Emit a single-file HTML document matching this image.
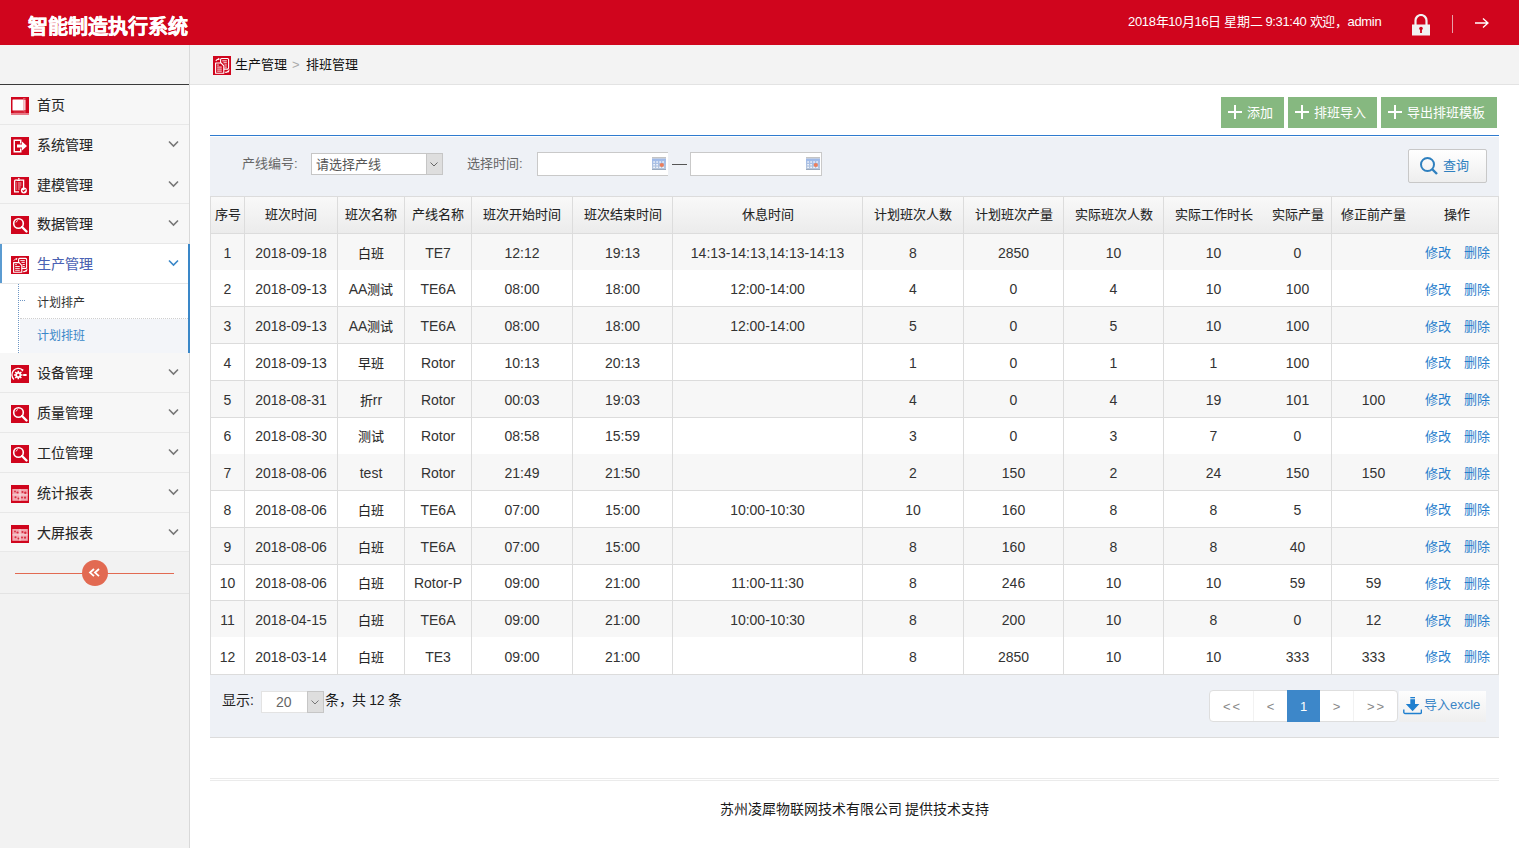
<!DOCTYPE html>
<html lang="zh-CN"><head><meta charset="utf-8">
<style>
*{box-sizing:border-box;margin:0;padding:0}
html,body{width:1519px;height:848px;overflow:hidden;background:#fff;font-family:"Liberation Sans",sans-serif;color:#333}
.abs{position:absolute}
svg{display:block}
#hdr{left:0;top:0;width:1519px;height:45px;background:#d0051d}
#title{left:28px;top:14px;font-size:20px;font-weight:bold;color:#fff;-webkit-text-stroke:0.4px #fff;line-height:26px;white-space:nowrap}
#hinfo{left:1128px;top:13px;font-size:13px;letter-spacing:-0.35px;color:#fff;line-height:18px;white-space:nowrap}
#side{left:0;top:45px;width:190px;height:803px;background:#f2f2f2;border-right:1px solid #d9d9d9}
.mi{position:absolute;left:0;width:189px;height:40px;background:#f7f7f7;border-bottom:1px solid #e8e8e8}
.mi .ic{position:absolute;left:11px;top:12px;width:18px;height:18px}
.mi .tx{position:absolute;left:37px;top:11px;font-size:14px;line-height:18px;color:#262626;-webkit-text-stroke:0.08px #262626;white-space:nowrap}
.mi .chev{position:absolute;left:168px;top:15px;width:11px;height:8px}
.sub{position:absolute;left:0;width:189px;background:#fff}
.sub .tx{position:absolute;left:37px;font-size:12px;line-height:16px;color:#333;white-space:nowrap}
#crumb{left:190px;top:45px;width:1329px;height:40px;background:#f3f3f3;border-bottom:1px solid #e3e3e3}
.btn{position:absolute;top:97px;height:31px;background:#86b880;color:#fff;font-size:13px;line-height:31px;white-space:nowrap}
.btn .pl{position:absolute;left:7px;top:8px;width:14px;height:14px}
.btn .bt{position:absolute;left:26px;top:0}
#bline{left:210px;top:135px;width:1289px;height:1px;background:#2f7bcf}
#filter{left:210px;top:137px;width:1289px;height:60px;background:#eef1f6}
.lbl{position:absolute;font-size:13px;color:#666;line-height:18px;white-space:nowrap}
.inp{position:absolute;background:#fff;border:1px solid #c9c9c9}
.thbg{background:linear-gradient(#f9f9f9,#ebebeb)}
.hl{left:210px;width:1289px;height:1px;background:#dcdcdc}
.vl{top:196px;width:1px;height:479px;background:#dcdcdc}
.th{top:206px;font-size:13px;line-height:18px;text-align:center;color:#222;-webkit-text-stroke:0.08px #222;white-space:nowrap}
.td{font-size:14px;line-height:18px;text-align:center;color:#333;white-space:nowrap}
.c{font-size:13px;color:#262626;-webkit-text-stroke:0.08px #262626}
.ops{left:1416px;width:82px;text-align:center;font-size:13px;line-height:18px;white-space:nowrap}
.ops a{color:#267dcc;text-decoration:none}
#pager{left:210px;top:675px;width:1289px;height:63px;background:#eef1f6;border-bottom:1px solid #dcdcdc}
#foot{left:210px;top:778px;width:1289px;height:3px;border-top:1px solid #ebebeb;border-bottom:1px solid #ebebeb}
#ftxt{left:190px;top:800px;width:1329px;text-align:center;font-size:14px;color:#1a1a1a;line-height:18px;white-space:nowrap}
</style></head><body>
<div id="hdr" class="abs">
  <div id="title" class="abs">智能制造执行系统</div>
  <div id="hinfo" class="abs">2018年10月16日 星期二 9:31:40 欢迎，admin</div>
  <svg class="abs" style="left:1411px;top:14px" width="20" height="22" viewBox="0 0 20 22"><path d="M4.5 11V6.5a5.5 5.5 0 0 1 11 0V11" fill="none" stroke="#f2f2f2" stroke-width="2.2"/><rect x="1" y="10.5" width="18" height="11" fill="#f2f2f2"/><circle cx="10" cy="14.5" r="1.8" fill="#d0051d"/><rect x="9.1" y="15" width="1.8" height="4" fill="#d0051d"/></svg>
  <div class="abs" style="left:1452px;top:15px;width:1px;height:18px;background:#e8a0a8"></div>
  <svg class="abs" style="left:1474px;top:17px" width="16" height="12" viewBox="0 0 16 12"><path d="M1 6h13M9 1.5l5 4.5-5 4.5" fill="none" stroke="#fff" stroke-width="1.3"/></svg>
</div>
<div id="side" class="abs"></div>
<div class="abs" style="left:0;top:45px;width:189px;height:39px;background:#f3f3f3"></div>
<div class="abs" style="left:0;top:84px;width:189px;height:1px;background:#3a3a3a"></div>
<div class="mi" style="top:85px;height:40px;"><svg class="ic" viewBox="0 0 18 18"><rect x="0" y="0" width="18" height="18" fill="#d0051d"/><rect x="12" y="1" width="6" height="17" fill="#e8909a" opacity="0.6"/><rect x="14.5" y="1" width="3.5" height="17" fill="#d0051d"/><rect x="1.5" y="2.5" width="11" height="11" rx="0.5" fill="#fff"/><rect x="12.5" y="3" width="2" height="10" fill="#f6c9ce"/><rect x="2.5" y="14.2" width="11" height="1.8" fill="#d7283c"/><rect x="0" y="16" width="18" height="2" fill="#e77a87"/></svg><div class="tx">首页</div></div>
<div class="mi" style="top:125px;height:40px;border-bottom-color:#f7f7f7"><svg class="ic" viewBox="0 0 18 18"><rect x="0" y="0" width="18" height="18" fill="#d0051d"/><path d="M2.5 2.5h8v4h-1.5v-2.5h-5v10h5v-2.5h1.5v4h-8z" fill="#fff"/><path d="M6 7.5h5v-3l5 4.5-5 4.5v-3h-5z" fill="#fff"/></svg><div class="tx">系统管理</div><svg class="chev" viewBox="0 0 11 8"><path d="M1 1.5l4.5 4.5 4.5-4.5" fill="none" stroke="#777" stroke-width="1.6"/></svg></div>
<div class="mi" style="top:165px;height:39px;"><svg class="ic" viewBox="0 0 18 18"><rect x="0" y="0" width="18" height="18" fill="#d0051d"/><path d="M3.6 3.2h2.4M9.6 3.2h3v8.3M8 14.8H3.6V3.2" fill="none" stroke="#fff" stroke-width="1.3"/><path d="M5.6 2.6h4.4l-0.6 1.4H6.2z" fill="#fff"/><circle cx="7.8" cy="1.8" r="0.9" fill="#fff"/><path d="M5.2 6h0.8M6.8 6h3.6M5.2 8h0.8M6.8 8h3.6M5.2 10h0.8M6.8 10h2.8M5.2 12h0.8M6.8 12h2" stroke="#fff" stroke-width="0.9" opacity="0.8"/><circle cx="12.9" cy="13.4" r="3" fill="#fff"/><path d="M11.5 13.4l1.1 1.1 1.9-2" stroke="#d0051d" stroke-width="1.1" fill="none"/></svg><div class="tx">建模管理</div><svg class="chev" viewBox="0 0 11 8"><path d="M1 1.5l4.5 4.5 4.5-4.5" fill="none" stroke="#777" stroke-width="1.6"/></svg></div>
<div class="mi" style="top:204px;height:40px;"><svg class="ic" viewBox="0 0 18 18"><rect x="0" y="0" width="18" height="18" fill="#d0051d"/><circle cx="7.5" cy="7.5" r="4.8" fill="none" stroke="#fff" stroke-width="1.6"/><path d="M11 11l4.5 4.5" stroke="#fff" stroke-width="2.4" stroke-linecap="round"/><path d="M5 6.5a2.5 2.5 0 0 1 2-2" stroke="#fff" stroke-width="0.8" fill="none"/></svg><div class="tx">数据管理</div><svg class="chev" viewBox="0 0 11 8"><path d="M1 1.5l4.5 4.5 4.5-4.5" fill="none" stroke="#777" stroke-width="1.6"/></svg></div>
<div class="mi" style="top:353px;height:40px;"><svg class="ic" viewBox="0 0 18 18"><rect x="0" y="0" width="18" height="18" fill="#d0051d"/><path d="M3 14.5A5.8 5.8 0 0 1 11.5 5" fill="none" stroke="#fff" stroke-width="1.3"/><path d="M10.2 3.8l2.6 1-1.8 2z" fill="#fff"/><circle cx="7.3" cy="10" r="2.9" fill="#fff"/><path d="M7.3 5.8v8.4M3.1 10h8.4M4.3 7l6 6M10.3 7l-6 6" stroke="#fff" stroke-width="1.6"/><circle cx="7.3" cy="10" r="1.2" fill="#d0051d"/><path d="M12.2 10h3.4" stroke="#fff" stroke-width="2"/></svg><div class="tx">设备管理</div><svg class="chev" viewBox="0 0 11 8"><path d="M1 1.5l4.5 4.5 4.5-4.5" fill="none" stroke="#777" stroke-width="1.6"/></svg></div>
<div class="mi" style="top:393px;height:40px;"><svg class="ic" viewBox="0 0 18 18"><rect x="0" y="0" width="18" height="18" fill="#d0051d"/><circle cx="7.5" cy="7.5" r="4.8" fill="none" stroke="#fff" stroke-width="1.6"/><path d="M11 11l4.5 4.5" stroke="#fff" stroke-width="2.4" stroke-linecap="round"/><path d="M5 6.5a2.5 2.5 0 0 1 2-2" stroke="#fff" stroke-width="0.8" fill="none"/></svg><div class="tx">质量管理</div><svg class="chev" viewBox="0 0 11 8"><path d="M1 1.5l4.5 4.5 4.5-4.5" fill="none" stroke="#777" stroke-width="1.6"/></svg></div>
<div class="mi" style="top:433px;height:40px;"><svg class="ic" viewBox="0 0 18 18"><rect x="0" y="0" width="18" height="18" fill="#d0051d"/><circle cx="7.5" cy="7.5" r="4.8" fill="none" stroke="#fff" stroke-width="1.6"/><path d="M11 11l4.5 4.5" stroke="#fff" stroke-width="2.4" stroke-linecap="round"/><path d="M5 6.5a2.5 2.5 0 0 1 2-2" stroke="#fff" stroke-width="0.8" fill="none"/></svg><div class="tx">工位管理</div><svg class="chev" viewBox="0 0 11 8"><path d="M1 1.5l4.5 4.5 4.5-4.5" fill="none" stroke="#777" stroke-width="1.6"/></svg></div>
<div class="mi" style="top:473px;height:40px;"><svg class="ic" viewBox="0 0 18 18"><rect x="0" y="0" width="18" height="18" fill="#d0051d"/><rect x="1.3" y="4" width="15.5" height="11.8" fill="#f1a8b0"/><path d="M9 4v11.8M1.3 9.9h15.5" stroke="#fbe3e6" stroke-width="0.8"/><g fill="#d0051d" opacity="0.75"><circle cx="4" cy="6.5" r="0.9"/><circle cx="6.5" cy="7.5" r="1.1"/><circle cx="11.5" cy="7" r="1.1"/><circle cx="14.3" cy="7.8" r="1.2"/><circle cx="4.5" cy="12.2" r="1"/><circle cx="7.4" cy="13.5" r="0.9"/><circle cx="11" cy="12.5" r="1"/><circle cx="14" cy="12.7" r="1.1"/></g></svg><div class="tx">统计报表</div><svg class="chev" viewBox="0 0 11 8"><path d="M1 1.5l4.5 4.5 4.5-4.5" fill="none" stroke="#777" stroke-width="1.6"/></svg></div>
<div class="mi" style="top:513px;height:39px;"><svg class="ic" viewBox="0 0 18 18"><rect x="0" y="0" width="18" height="18" fill="#d0051d"/><rect x="1.3" y="4" width="15.5" height="11.8" fill="#f1a8b0"/><path d="M9 4v11.8M1.3 9.9h15.5" stroke="#fbe3e6" stroke-width="0.8"/><g fill="#d0051d" opacity="0.75"><circle cx="4" cy="6.5" r="0.9"/><circle cx="6.5" cy="7.5" r="1.1"/><circle cx="11.5" cy="7" r="1.1"/><circle cx="14.3" cy="7.8" r="1.2"/><circle cx="4.5" cy="12.2" r="1"/><circle cx="7.4" cy="13.5" r="0.9"/><circle cx="11" cy="12.5" r="1"/><circle cx="14" cy="12.7" r="1.1"/></g></svg><div class="tx">大屏报表</div><svg class="chev" viewBox="0 0 11 8"><path d="M1 1.5l4.5 4.5 4.5-4.5" fill="none" stroke="#777" stroke-width="1.6"/></svg></div>
<div class="mi" style="top:244px;height:40px;background:#fff"><svg class="ic" viewBox="0 0 18 18"><rect x="0" y="0" width="18" height="18" fill="#d0051d"/><rect x="7.6" y="2.4" width="8" height="10" rx="1" fill="none" stroke="#fff" stroke-width="1.1"/><path d="M9.3 4.6h4.5M10.5 6.4h3.3M11.5 8.5h2.3M11.5 10.5h2.3" stroke="#fff" stroke-width="0.9"/><path d="M2.6 6.6h5.5l2.7 2.7v7H2.6z" fill="#d0051d" stroke="#fff" stroke-width="1.1" stroke-linejoin="round"/><path d="M4.2 8.6h1.6M4.2 10.5h4.6M4.2 12.4h4.6M4.2 14.3h4.6" stroke="#fff" stroke-width="0.9"/><path d="M2.8 4.6c0.8-1.2 1.8-1.8 3.2-1.8l-0.6-0.8M6 2.8l-0.9 0.9" stroke="#fff" stroke-width="1" fill="none"/><path d="M12.2 15.6c1.2 0 2.4-0.5 3.4-1.4l-0.3 1.2" stroke="#fff" stroke-width="1.2" fill="none"/></svg><div class="tx" style="color:#4a62b8">生产管理</div><svg class="chev" viewBox="0 0 11 8"><path d="M1 1.5l4.5 4.5 4.5-4.5" fill="none" stroke="#3a87c8" stroke-width="1.6"/></svg></div>
<div class="abs" style="left:0;top:244px;width:2px;height:39px;background:#5b9bd1"></div>
<div class="sub" style="top:284px;height:35px"><div class="tx" style="top:11px">计划排产</div></div>
<div class="abs" style="left:20px;top:318px;width:168px;height:1px;border-top:1px dotted #cfcfcf"></div>
<div class="sub" style="top:319px;height:34px;background:#fff"><div class="abs" style="left:20px;top:0;width:169px;height:34px;background:#f3f5f9"></div><div class="tx" style="top:9px;color:#3a87c8">计划排班</div></div>
<div class="abs" style="left:18px;top:284px;width:1px;height:69px;border-left:1px dotted #6e96c4"></div>
<div class="abs" style="left:18px;top:300px;width:7px;height:1px;border-top:1px dotted #6e96c4"></div>
<div class="abs" style="left:188px;top:244px;width:2px;height:109px;background:#3a87c8"></div>
<div class="abs" style="left:0;top:552px;width:189px;height:42px;background:#f2f2f2;border-bottom:1px solid #e3e3e3"></div>
<div class="abs" style="left:15px;top:573px;width:159px;height:1px;background:#e26a52"></div>
<svg class="abs" style="left:82px;top:560px" width="26" height="26" viewBox="0 0 26 26"><circle cx="13" cy="13" r="13" fill="#e26a52"/><path d="M12 9l-4 3.6 4 3.6M17 9l-4 3.6 4 3.6" fill="none" stroke="#fff" stroke-width="1.8"/></svg>
<div id="crumb" class="abs"></div>
<svg class="abs" style="left:213px;top:56px" width="18" height="19" viewBox="0 0 18 18" preserveAspectRatio="none"><rect x="0" y="0" width="18" height="18" fill="#d0051d"/><rect x="7.6" y="2.4" width="8" height="10" rx="1" fill="none" stroke="#fff" stroke-width="1.1"/><path d="M9.3 4.6h4.5M10.5 6.4h3.3M11.5 8.5h2.3M11.5 10.5h2.3" stroke="#fff" stroke-width="0.9"/><path d="M2.6 6.6h5.5l2.7 2.7v7H2.6z" fill="#d0051d" stroke="#fff" stroke-width="1.1" stroke-linejoin="round"/><path d="M4.2 8.6h1.6M4.2 10.5h4.6M4.2 12.4h4.6M4.2 14.3h4.6" stroke="#fff" stroke-width="0.9"/><path d="M2.8 4.6c0.8-1.2 1.8-1.8 3.2-1.8l-0.6-0.8M6 2.8l-0.9 0.9" stroke="#fff" stroke-width="1" fill="none"/><path d="M12.2 15.6c1.2 0 2.4-0.5 3.4-1.4l-0.3 1.2" stroke="#fff" stroke-width="1.2" fill="none"/></svg>
<div class="abs" style="left:235px;top:56px;font-size:13px;line-height:18px;color:#111;white-space:nowrap">生产管理</div>
<div class="abs" style="left:292px;top:56px;font-size:13px;line-height:18px;color:#aaa">&gt;</div>
<div class="abs" style="left:306px;top:56px;font-size:13px;line-height:18px;color:#111;white-space:nowrap">排班管理</div>
<div class="btn" style="left:1221px;width:63px"><svg class="pl" viewBox="0 0 14 14"><path d="M6 0h2v6h6v2H8v6H6V8H0V6h6z" fill="#fff"/></svg><span class="bt">添加</span></div>
<div class="btn" style="left:1288px;width:89px"><svg class="pl" viewBox="0 0 14 14"><path d="M6 0h2v6h6v2H8v6H6V8H0V6h6z" fill="#fff"/></svg><span class="bt">排班导入</span></div>
<div class="btn" style="left:1381px;width:116px"><svg class="pl" viewBox="0 0 14 14"><path d="M6 0h2v6h6v2H8v6H6V8H0V6h6z" fill="#fff"/></svg><span class="bt">导出排班模板</span></div>
<div id="bline" class="abs"></div>
<div id="filter" class="abs"></div>
<div class="lbl" style="left:242px;top:155px">产线编号:</div>
<div class="inp" style="left:311px;top:153px;width:132px;height:22px;border-color:#c6c6c6"></div>
<div class="abs" style="left:316px;top:156px;font-size:13px;line-height:18px;color:#555;white-space:nowrap">请选择产线</div>
<div class="abs" style="left:426px;top:154px;width:16px;height:20px;background:#dedede;border-left:1px solid #c6c6c6"></div>
<svg class="abs" style="left:430px;top:162px" width="8" height="5" viewBox="0 0 8 5"><path d="M0.5 0.5l3.5 3.5 3.5-3.5" fill="none" stroke="#666" stroke-width="1"/></svg>
<div class="lbl" style="left:467px;top:155px">选择时间:</div>
<div class="inp" style="left:537px;top:152px;width:131px;height:24px;border-right:none"></div>
<svg class="abs" style="left:652px;top:157px" width="14" height="13" viewBox="0 0 14 13"><defs><linearGradient id="cg652" x1="0" y1="0" x2="0" y2="1"><stop offset="0" stop-color="#9db9ea"/><stop offset="1" stop-color="#b9c8dc"/></linearGradient></defs><rect x="0" y="0" width="14" height="1.6" fill="#c4c4c4"/><rect x="0" y="1.6" width="14" height="11.4" fill="url(#cg652)"/><rect x="0" y="12" width="14" height="1" fill="#9aa9bd"/><g fill="#fff" opacity="0.9"><rect x="1.3" y="4.3" width="1.6" height="1.4"/><rect x="4.3" y="4.3" width="1.6" height="1.4"/><rect x="7.3" y="4.3" width="1.6" height="1.4"/><rect x="10.3" y="4.3" width="1.6" height="1.4"/><rect x="1.3" y="7" width="1.6" height="1.4"/><rect x="4.3" y="7" width="1.6" height="1.4"/><rect x="1.3" y="9.6" width="1.6" height="1.4"/><rect x="4.3" y="9.6" width="1.6" height="1.4"/><rect x="7.3" y="9.6" width="1.6" height="1.4"/><rect x="10.3" y="9.6" width="1.6" height="1.4"/></g><circle cx="9.8" cy="8" r="2.1" fill="#ec7e5c"/></svg>
<div class="abs" style="left:672px;top:164px;width:15px;height:1px;background:#555"></div>
<div class="inp" style="left:690px;top:152px;width:132px;height:24px"></div>
<svg class="abs" style="left:806px;top:157px" width="14" height="13" viewBox="0 0 14 13"><defs><linearGradient id="cg806" x1="0" y1="0" x2="0" y2="1"><stop offset="0" stop-color="#9db9ea"/><stop offset="1" stop-color="#b9c8dc"/></linearGradient></defs><rect x="0" y="0" width="14" height="1.6" fill="#c4c4c4"/><rect x="0" y="1.6" width="14" height="11.4" fill="url(#cg806)"/><rect x="0" y="12" width="14" height="1" fill="#9aa9bd"/><g fill="#fff" opacity="0.9"><rect x="1.3" y="4.3" width="1.6" height="1.4"/><rect x="4.3" y="4.3" width="1.6" height="1.4"/><rect x="7.3" y="4.3" width="1.6" height="1.4"/><rect x="10.3" y="4.3" width="1.6" height="1.4"/><rect x="1.3" y="7" width="1.6" height="1.4"/><rect x="4.3" y="7" width="1.6" height="1.4"/><rect x="1.3" y="9.6" width="1.6" height="1.4"/><rect x="4.3" y="9.6" width="1.6" height="1.4"/><rect x="7.3" y="9.6" width="1.6" height="1.4"/><rect x="10.3" y="9.6" width="1.6" height="1.4"/></g><circle cx="9.8" cy="8" r="2.1" fill="#ec7e5c"/></svg>
<div class="abs" style="left:1408px;top:149px;width:79px;height:34px;border:1px solid #c8c8c8;border-radius:2px;background:linear-gradient(#fff,#eeeeee)"></div>
<svg class="abs" style="left:1419px;top:156px" width="20" height="20" viewBox="0 0 20 20"><circle cx="8.5" cy="8.5" r="6.5" fill="none" stroke="#2f80bf" stroke-width="2"/><path d="M13 13l5 5" stroke="#2f80bf" stroke-width="2.4"/></svg>
<div class="abs" style="left:1443px;top:157px;font-size:13px;line-height:18px;color:#2f80bf">查询</div>
<div class="abs thbg" style="left:210px;top:196px;width:1289px;height:38px"></div>
<div class="abs" style="left:211px;top:233.00px;width:1287px;height:36.75px;background:#f7f7f7"></div>
<div class="abs" style="left:211px;top:269.75px;width:1287px;height:36.75px;background:#fff"></div>
<div class="abs" style="left:211px;top:306.50px;width:1287px;height:36.75px;background:#f7f7f7"></div>
<div class="abs" style="left:211px;top:343.25px;width:1287px;height:36.75px;background:#fff"></div>
<div class="abs" style="left:211px;top:380.00px;width:1287px;height:36.75px;background:#f7f7f7"></div>
<div class="abs" style="left:211px;top:416.75px;width:1287px;height:36.75px;background:#fff"></div>
<div class="abs" style="left:211px;top:453.50px;width:1287px;height:36.75px;background:#f7f7f7"></div>
<div class="abs" style="left:211px;top:490.25px;width:1287px;height:36.75px;background:#fff"></div>
<div class="abs" style="left:211px;top:527.00px;width:1287px;height:36.75px;background:#f7f7f7"></div>
<div class="abs" style="left:211px;top:563.75px;width:1287px;height:36.75px;background:#fff"></div>
<div class="abs" style="left:211px;top:600.50px;width:1287px;height:36.75px;background:#f7f7f7"></div>
<div class="abs" style="left:211px;top:637.25px;width:1287px;height:36.75px;background:#fff"></div>
<div class="abs hl" style="top:196px"></div>
<div class="abs hl" style="top:233px"></div>
<div class="abs hl" style="top:306px"></div>
<div class="abs hl" style="top:343px"></div>
<div class="abs hl" style="top:380px"></div>
<div class="abs hl" style="top:417px"></div>
<div class="abs hl" style="top:490px"></div>
<div class="abs hl" style="top:527px"></div>
<div class="abs hl" style="top:564px"></div>
<div class="abs hl" style="top:600px"></div>
<div class="abs hl" style="top:674px"></div>
<div class="abs vl" style="left:210px"></div>
<div class="abs vl" style="left:244px"></div>
<div class="abs vl" style="left:337px"></div>
<div class="abs vl" style="left:404px"></div>
<div class="abs vl" style="left:471px"></div>
<div class="abs vl" style="left:572px"></div>
<div class="abs vl" style="left:672px"></div>
<div class="abs vl" style="left:862px"></div>
<div class="abs vl" style="left:963px"></div>
<div class="abs vl" style="left:1063px"></div>
<div class="abs vl" style="left:1163px"></div>
<div class="abs vl" style="left:1331px"></div>
<div class="abs vl" style="left:1498px"></div>
<div class="abs th" style="left:211px;width:33px">序号</div>
<div class="abs th" style="left:245px;width:92px">班次时间</div>
<div class="abs th" style="left:338px;width:66px">班次名称</div>
<div class="abs th" style="left:405px;width:66px">产线名称</div>
<div class="abs th" style="left:472px;width:100px">班次开始时间</div>
<div class="abs th" style="left:573px;width:99px">班次结束时间</div>
<div class="abs th" style="left:673px;width:189px">休息时间</div>
<div class="abs th" style="left:863px;width:100px">计划班次人数</div>
<div class="abs th" style="left:964px;width:99px">计划班次产量</div>
<div class="abs th" style="left:1064px;width:99px">实际班次人数</div>
<div class="abs th" style="left:1164px;width:99px">实际工作时长</div>
<div class="abs th" style="left:1264px;width:67px">实际产量</div>
<div class="abs th" style="left:1332px;width:83px">修正前产量</div>
<div class="abs th" style="left:1416px;width:82px">操作</div>
<div class="abs td" style="left:211px;width:33px;top:243.50px">1</div>
<div class="abs td" style="left:245px;width:92px;top:243.50px">2018-09-18</div>
<div class="abs td" style="left:338px;width:66px;top:243.50px"><span class="c">白班</span></div>
<div class="abs td" style="left:405px;width:66px;top:243.50px">TE7</div>
<div class="abs td" style="left:472px;width:100px;top:243.50px">12:12</div>
<div class="abs td" style="left:573px;width:99px;top:243.50px">19:13</div>
<div class="abs td" style="left:673px;width:189px;top:243.50px">14:13-14:13,14:13-14:13</div>
<div class="abs td" style="left:863px;width:100px;top:243.50px">8</div>
<div class="abs td" style="left:964px;width:99px;top:243.50px">2850</div>
<div class="abs td" style="left:1064px;width:99px;top:243.50px">10</div>
<div class="abs td" style="left:1164px;width:99px;top:243.50px">10</div>
<div class="abs td" style="left:1264px;width:67px;top:243.50px">0</div>
<div class="abs ops" style="top:244.00px"><a>修改</a><a style="margin-left:13px">删除</a></div>
<div class="abs td" style="left:211px;width:33px;top:280.25px">2</div>
<div class="abs td" style="left:245px;width:92px;top:280.25px">2018-09-13</div>
<div class="abs td" style="left:338px;width:66px;top:280.25px">AA<span class="c">测试</span></div>
<div class="abs td" style="left:405px;width:66px;top:280.25px">TE6A</div>
<div class="abs td" style="left:472px;width:100px;top:280.25px">08:00</div>
<div class="abs td" style="left:573px;width:99px;top:280.25px">18:00</div>
<div class="abs td" style="left:673px;width:189px;top:280.25px">12:00-14:00</div>
<div class="abs td" style="left:863px;width:100px;top:280.25px">4</div>
<div class="abs td" style="left:964px;width:99px;top:280.25px">0</div>
<div class="abs td" style="left:1064px;width:99px;top:280.25px">4</div>
<div class="abs td" style="left:1164px;width:99px;top:280.25px">10</div>
<div class="abs td" style="left:1264px;width:67px;top:280.25px">100</div>
<div class="abs ops" style="top:280.75px"><a>修改</a><a style="margin-left:13px">删除</a></div>
<div class="abs td" style="left:211px;width:33px;top:317.00px">3</div>
<div class="abs td" style="left:245px;width:92px;top:317.00px">2018-09-13</div>
<div class="abs td" style="left:338px;width:66px;top:317.00px">AA<span class="c">测试</span></div>
<div class="abs td" style="left:405px;width:66px;top:317.00px">TE6A</div>
<div class="abs td" style="left:472px;width:100px;top:317.00px">08:00</div>
<div class="abs td" style="left:573px;width:99px;top:317.00px">18:00</div>
<div class="abs td" style="left:673px;width:189px;top:317.00px">12:00-14:00</div>
<div class="abs td" style="left:863px;width:100px;top:317.00px">5</div>
<div class="abs td" style="left:964px;width:99px;top:317.00px">0</div>
<div class="abs td" style="left:1064px;width:99px;top:317.00px">5</div>
<div class="abs td" style="left:1164px;width:99px;top:317.00px">10</div>
<div class="abs td" style="left:1264px;width:67px;top:317.00px">100</div>
<div class="abs ops" style="top:317.50px"><a>修改</a><a style="margin-left:13px">删除</a></div>
<div class="abs td" style="left:211px;width:33px;top:353.75px">4</div>
<div class="abs td" style="left:245px;width:92px;top:353.75px">2018-09-13</div>
<div class="abs td" style="left:338px;width:66px;top:353.75px"><span class="c">早班</span></div>
<div class="abs td" style="left:405px;width:66px;top:353.75px">Rotor</div>
<div class="abs td" style="left:472px;width:100px;top:353.75px">10:13</div>
<div class="abs td" style="left:573px;width:99px;top:353.75px">20:13</div>
<div class="abs td" style="left:863px;width:100px;top:353.75px">1</div>
<div class="abs td" style="left:964px;width:99px;top:353.75px">0</div>
<div class="abs td" style="left:1064px;width:99px;top:353.75px">1</div>
<div class="abs td" style="left:1164px;width:99px;top:353.75px">1</div>
<div class="abs td" style="left:1264px;width:67px;top:353.75px">100</div>
<div class="abs ops" style="top:354.25px"><a>修改</a><a style="margin-left:13px">删除</a></div>
<div class="abs td" style="left:211px;width:33px;top:390.50px">5</div>
<div class="abs td" style="left:245px;width:92px;top:390.50px">2018-08-31</div>
<div class="abs td" style="left:338px;width:66px;top:390.50px"><span class="c">折</span>rr</div>
<div class="abs td" style="left:405px;width:66px;top:390.50px">Rotor</div>
<div class="abs td" style="left:472px;width:100px;top:390.50px">00:03</div>
<div class="abs td" style="left:573px;width:99px;top:390.50px">19:03</div>
<div class="abs td" style="left:863px;width:100px;top:390.50px">4</div>
<div class="abs td" style="left:964px;width:99px;top:390.50px">0</div>
<div class="abs td" style="left:1064px;width:99px;top:390.50px">4</div>
<div class="abs td" style="left:1164px;width:99px;top:390.50px">19</div>
<div class="abs td" style="left:1264px;width:67px;top:390.50px">101</div>
<div class="abs td" style="left:1332px;width:83px;top:390.50px">100</div>
<div class="abs ops" style="top:391.00px"><a>修改</a><a style="margin-left:13px">删除</a></div>
<div class="abs td" style="left:211px;width:33px;top:427.25px">6</div>
<div class="abs td" style="left:245px;width:92px;top:427.25px">2018-08-30</div>
<div class="abs td" style="left:338px;width:66px;top:427.25px"><span class="c">测试</span></div>
<div class="abs td" style="left:405px;width:66px;top:427.25px">Rotor</div>
<div class="abs td" style="left:472px;width:100px;top:427.25px">08:58</div>
<div class="abs td" style="left:573px;width:99px;top:427.25px">15:59</div>
<div class="abs td" style="left:863px;width:100px;top:427.25px">3</div>
<div class="abs td" style="left:964px;width:99px;top:427.25px">0</div>
<div class="abs td" style="left:1064px;width:99px;top:427.25px">3</div>
<div class="abs td" style="left:1164px;width:99px;top:427.25px">7</div>
<div class="abs td" style="left:1264px;width:67px;top:427.25px">0</div>
<div class="abs ops" style="top:427.75px"><a>修改</a><a style="margin-left:13px">删除</a></div>
<div class="abs td" style="left:211px;width:33px;top:464.00px">7</div>
<div class="abs td" style="left:245px;width:92px;top:464.00px">2018-08-06</div>
<div class="abs td" style="left:338px;width:66px;top:464.00px">test</div>
<div class="abs td" style="left:405px;width:66px;top:464.00px">Rotor</div>
<div class="abs td" style="left:472px;width:100px;top:464.00px">21:49</div>
<div class="abs td" style="left:573px;width:99px;top:464.00px">21:50</div>
<div class="abs td" style="left:863px;width:100px;top:464.00px">2</div>
<div class="abs td" style="left:964px;width:99px;top:464.00px">150</div>
<div class="abs td" style="left:1064px;width:99px;top:464.00px">2</div>
<div class="abs td" style="left:1164px;width:99px;top:464.00px">24</div>
<div class="abs td" style="left:1264px;width:67px;top:464.00px">150</div>
<div class="abs td" style="left:1332px;width:83px;top:464.00px">150</div>
<div class="abs ops" style="top:464.50px"><a>修改</a><a style="margin-left:13px">删除</a></div>
<div class="abs td" style="left:211px;width:33px;top:500.75px">8</div>
<div class="abs td" style="left:245px;width:92px;top:500.75px">2018-08-06</div>
<div class="abs td" style="left:338px;width:66px;top:500.75px"><span class="c">白班</span></div>
<div class="abs td" style="left:405px;width:66px;top:500.75px">TE6A</div>
<div class="abs td" style="left:472px;width:100px;top:500.75px">07:00</div>
<div class="abs td" style="left:573px;width:99px;top:500.75px">15:00</div>
<div class="abs td" style="left:673px;width:189px;top:500.75px">10:00-10:30</div>
<div class="abs td" style="left:863px;width:100px;top:500.75px">10</div>
<div class="abs td" style="left:964px;width:99px;top:500.75px">160</div>
<div class="abs td" style="left:1064px;width:99px;top:500.75px">8</div>
<div class="abs td" style="left:1164px;width:99px;top:500.75px">8</div>
<div class="abs td" style="left:1264px;width:67px;top:500.75px">5</div>
<div class="abs ops" style="top:501.25px"><a>修改</a><a style="margin-left:13px">删除</a></div>
<div class="abs td" style="left:211px;width:33px;top:537.50px">9</div>
<div class="abs td" style="left:245px;width:92px;top:537.50px">2018-08-06</div>
<div class="abs td" style="left:338px;width:66px;top:537.50px"><span class="c">白班</span></div>
<div class="abs td" style="left:405px;width:66px;top:537.50px">TE6A</div>
<div class="abs td" style="left:472px;width:100px;top:537.50px">07:00</div>
<div class="abs td" style="left:573px;width:99px;top:537.50px">15:00</div>
<div class="abs td" style="left:863px;width:100px;top:537.50px">8</div>
<div class="abs td" style="left:964px;width:99px;top:537.50px">160</div>
<div class="abs td" style="left:1064px;width:99px;top:537.50px">8</div>
<div class="abs td" style="left:1164px;width:99px;top:537.50px">8</div>
<div class="abs td" style="left:1264px;width:67px;top:537.50px">40</div>
<div class="abs ops" style="top:538.00px"><a>修改</a><a style="margin-left:13px">删除</a></div>
<div class="abs td" style="left:211px;width:33px;top:574.25px">10</div>
<div class="abs td" style="left:245px;width:92px;top:574.25px">2018-08-06</div>
<div class="abs td" style="left:338px;width:66px;top:574.25px"><span class="c">白班</span></div>
<div class="abs td" style="left:405px;width:66px;top:574.25px">Rotor-P</div>
<div class="abs td" style="left:472px;width:100px;top:574.25px">09:00</div>
<div class="abs td" style="left:573px;width:99px;top:574.25px">21:00</div>
<div class="abs td" style="left:673px;width:189px;top:574.25px">11:00-11:30</div>
<div class="abs td" style="left:863px;width:100px;top:574.25px">8</div>
<div class="abs td" style="left:964px;width:99px;top:574.25px">246</div>
<div class="abs td" style="left:1064px;width:99px;top:574.25px">10</div>
<div class="abs td" style="left:1164px;width:99px;top:574.25px">10</div>
<div class="abs td" style="left:1264px;width:67px;top:574.25px">59</div>
<div class="abs td" style="left:1332px;width:83px;top:574.25px">59</div>
<div class="abs ops" style="top:574.75px"><a>修改</a><a style="margin-left:13px">删除</a></div>
<div class="abs td" style="left:211px;width:33px;top:611.00px">11</div>
<div class="abs td" style="left:245px;width:92px;top:611.00px">2018-04-15</div>
<div class="abs td" style="left:338px;width:66px;top:611.00px"><span class="c">白班</span></div>
<div class="abs td" style="left:405px;width:66px;top:611.00px">TE6A</div>
<div class="abs td" style="left:472px;width:100px;top:611.00px">09:00</div>
<div class="abs td" style="left:573px;width:99px;top:611.00px">21:00</div>
<div class="abs td" style="left:673px;width:189px;top:611.00px">10:00-10:30</div>
<div class="abs td" style="left:863px;width:100px;top:611.00px">8</div>
<div class="abs td" style="left:964px;width:99px;top:611.00px">200</div>
<div class="abs td" style="left:1064px;width:99px;top:611.00px">10</div>
<div class="abs td" style="left:1164px;width:99px;top:611.00px">8</div>
<div class="abs td" style="left:1264px;width:67px;top:611.00px">0</div>
<div class="abs td" style="left:1332px;width:83px;top:611.00px">12</div>
<div class="abs ops" style="top:611.50px"><a>修改</a><a style="margin-left:13px">删除</a></div>
<div class="abs td" style="left:211px;width:33px;top:647.75px">12</div>
<div class="abs td" style="left:245px;width:92px;top:647.75px">2018-03-14</div>
<div class="abs td" style="left:338px;width:66px;top:647.75px"><span class="c">白班</span></div>
<div class="abs td" style="left:405px;width:66px;top:647.75px">TE3</div>
<div class="abs td" style="left:472px;width:100px;top:647.75px">09:00</div>
<div class="abs td" style="left:573px;width:99px;top:647.75px">21:00</div>
<div class="abs td" style="left:863px;width:100px;top:647.75px">8</div>
<div class="abs td" style="left:964px;width:99px;top:647.75px">2850</div>
<div class="abs td" style="left:1064px;width:99px;top:647.75px">10</div>
<div class="abs td" style="left:1164px;width:99px;top:647.75px">10</div>
<div class="abs td" style="left:1264px;width:67px;top:647.75px">333</div>
<div class="abs td" style="left:1332px;width:83px;top:647.75px">333</div>
<div class="abs ops" style="top:648.25px"><a>修改</a><a style="margin-left:13px">删除</a></div>
<div id="pager" class="abs"></div>
<div class="abs" style="left:222px;top:691px;font-size:14px;line-height:18px;color:#222;white-space:nowrap">显示:</div>
<div class="abs" style="left:261px;top:691px;width:63px;height:22px;background:#fff;border:1px solid #e3e3e3"></div>
<div class="abs" style="left:276px;top:694px;font-size:14px;line-height:16px;color:#666">20</div>
<div class="abs" style="left:307px;top:691px;width:17px;height:22px;background:#dedede;border:1px solid #c6c6c6"></div>
<svg class="abs" style="left:311px;top:700px" width="8" height="5" viewBox="0 0 8 5"><path d="M0.5 0.5l3.5 3.5 3.5-3.5" fill="none" stroke="#777" stroke-width="1"/></svg>
<div class="abs" style="left:325px;top:691px;font-size:14px;line-height:18px;color:#1a1a1a;white-space:nowrap;letter-spacing:-0.4px">条，共 12 条</div>
<div class="abs" style="left:1209px;top:690px;width:189px;height:32px;background:#fff;border:1px solid #dedede;border-radius:4px"></div>
<div class="abs" style="left:1253px;top:691px;width:1px;height:30px;background:#f2f2f2"></div>
<div class="abs" style="left:1287px;top:691px;width:1px;height:30px;background:#f2f2f2"></div>
<div class="abs" style="left:1353px;top:691px;width:1px;height:30px;background:#f2f2f2"></div>
<div class="abs" style="left:1287px;top:690px;width:33px;height:32px;background:#3d87c9"></div>
<div class="abs" style="left:1210px;top:698px;width:43px;text-align:center;font-size:13px;line-height:18px;color:#888;letter-spacing:2px;text-indent:2px">&lt;&lt;</div>
<div class="abs" style="left:1254px;top:698px;width:33px;text-align:center;font-size:13px;line-height:18px;color:#888;letter-spacing:2px;text-indent:2px">&lt;</div>
<div class="abs" style="left:1287px;top:698px;width:33px;text-align:center;font-size:13px;line-height:18px;color:#fff;letter-spacing:2px;text-indent:2px">1</div>
<div class="abs" style="left:1320px;top:698px;width:33px;text-align:center;font-size:13px;line-height:18px;color:#888;letter-spacing:2px;text-indent:2px">&gt;</div>
<div class="abs" style="left:1354px;top:698px;width:43px;text-align:center;font-size:13px;line-height:18px;color:#888;letter-spacing:2px;text-indent:2px">&gt;&gt;</div>
<div class="abs" style="left:1399px;top:691px;width:87px;height:31px;background:linear-gradient(#fdfdfd,#efefef)"></div>
<svg class="abs" style="left:1403px;top:697px" width="19" height="19" viewBox="0 0 19 19"><rect x="7.3" y="0" width="4.7" height="1.3" fill="#1f7fcf"/><rect x="7.3" y="2.2" width="4.7" height="5.5" fill="#1f7fcf"/><path d="M2.8 7h13.6l-6.8 7.3z" fill="#1f7fcf"/><path d="M0.8 12.6v2.6a1.3 1.3 0 0 0 1.3 1.3h15a1.3 1.3 0 0 0 1.3-1.3v-2.6" fill="none" stroke="#1f7fcf" stroke-width="1.4"/></svg>
<div class="abs" style="left:1424px;top:696px;font-size:13px;line-height:18px;color:#3a85c6;white-space:nowrap">导入excle</div>
<div id="foot" class="abs"></div>
<div id="ftxt" class="abs">苏州凌犀物联网技术有限公司 提供技术支持</div>
</body></html>
